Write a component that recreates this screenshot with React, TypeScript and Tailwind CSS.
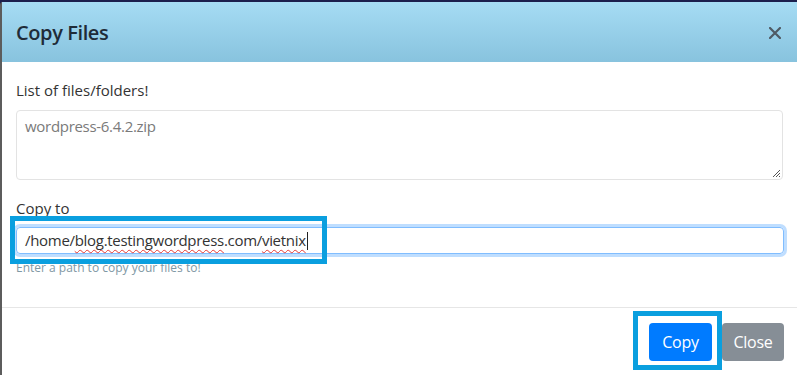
import React from "react";

export default function App() {
  const font = { fontFamily: '"Open Sans", "Noto Sans", Arial, sans-serif' };
  return (
    <div
      className="relative w-[797px] h-[375px] overflow-hidden bg-[#1b1f4d] pt-[2px]"
      style={font}
    >
      <div className="h-[373px] bg-white border-l-2 border-[#5c5c5c] rounded-tl-[3px] flex flex-col">
        {/* header */}
        <div className="h-[60px] shrink-0 bg-gradient-to-b from-[#a6dcf4] to-[#88c3de] flex items-center justify-between pl-[14px] pr-[15px]">
          <div className="text-[20px] font-semibold text-[#1f2b38] tracking-[-0.4px] mt-[2px]">Copy Files</div>
          <svg width="12" height="12" viewBox="0 0 12 12" className="mr-[1px] mt-[2px]">
            <path d="M1 1 L11 11 M11 1 L1 11" stroke="#4f5a64" strokeWidth="2.2" strokeLinecap="round" />
          </svg>
        </div>
        {/* body */}
        <div className="pl-[14px] pr-[13px] pt-[16px] pb-[30px] flex flex-col">
          <div className="text-[15px] leading-[24px] text-[#333] mb-[8px]">List of files/folders!</div>
          <div className="relative h-[70px] border border-[#e3e3e3] rounded-[4px] px-[8px] pt-[4px] text-[15px] tracking-[-0.3px] text-[#7a7a7a] mr-[1px]">
            wordpress-6.4.2.zip
            <svg width="10" height="10" viewBox="0 0 10 10" className="absolute right-[1px] bottom-[1px]">
              <path d="M9 2 L2 9 M9 5 L5 9 M9 8 L8 9" stroke="#555" strokeWidth="1" />
            </svg>
          </div>
          <div className="text-[15px] leading-[24px] text-[#333] mt-[16px] mb-[7px]">Copy to</div>
          <div className="h-[27px] border border-[#80bdff] rounded-[4px] shadow-[0_0_0_3px_rgba(0,123,255,0.25)] flex items-center px-[8px] text-[15px] tracking-[-0.3px] text-[#333]">
            <span>/home/</span>
            <span className="underline decoration-wavy decoration-[#e53935] decoration-1 underline-offset-[3px]">blog.testingwordpress</span>
            <span>.com/</span>
            <span className="underline decoration-wavy decoration-[#e53935] decoration-1 underline-offset-[3px]">vietnix</span>
            <span className="inline-block w-[1px] h-[18px] bg-[#222] ml-[1px]"></span>
          </div>
          <div className="text-[12px] leading-[18px] text-[#7f98a4] mt-[5px]">Enter a path to copy your files to!</div>
        </div>
        {/* footer */}
        <div className="border-t border-[#e6e6e6] pt-[15px] pr-[13px] flex justify-end gap-[10px]">
          <button className="h-[38px] w-[63px] rounded-[4px] bg-[#007bff] text-white text-[16px] tracking-[-0.3px]">Copy</button>
          <button className="h-[38px] w-[62px] rounded-[4px] bg-[#868e96] text-white text-[16px] tracking-[-0.3px]">Close</button>
        </div>
      </div>
      {/* annotations */}
      <div className="absolute left-[10px] top-[216px] w-[317px] h-[48px] border-[5px] border-[#0a9fdf]"></div>
      <div className="absolute left-[633px] top-[311px] w-[89px] h-[59px] border-[5px] border-[#0a9fdf]"></div>
    </div>
  );
}
